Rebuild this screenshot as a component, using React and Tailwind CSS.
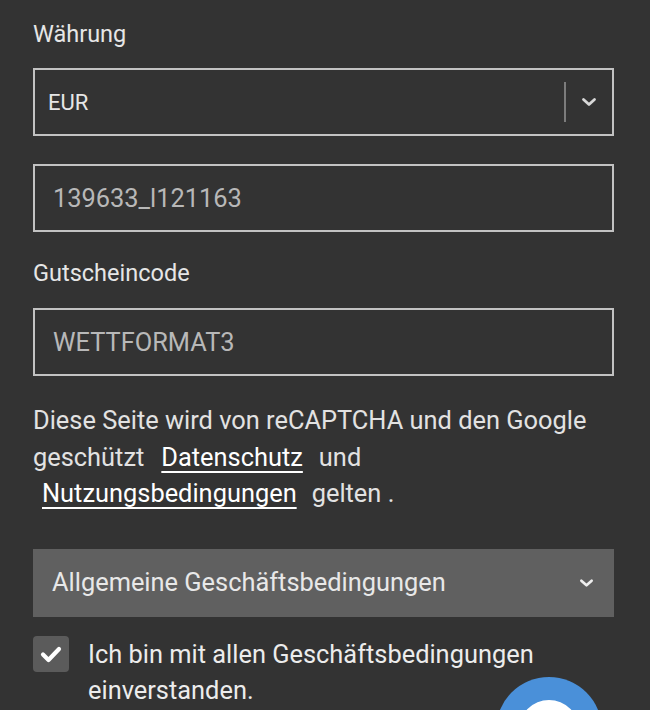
import React from "react";

function Chevron({ className }) {
  return (
    <svg viewBox="0 0 16 10" className={className} fill="none">
      <path d="M2.5 2.5 L8 7.5 L13.5 2.5" stroke="currentColor" strokeWidth="2.8" strokeLinecap="round" strokeLinejoin="round" />
    </svg>
  );
}

export default function App() {
  return (
    <div
      className="relative w-[650px] h-[710px] overflow-hidden bg-[#333333] pl-[33px] pr-[36px] pt-[20px] text-[#e4e4e4]"
      style={{ fontFamily: "Roboto, 'Noto Sans', sans-serif" }}
    >
      <div className="text-[23.5px] leading-[28px] text-[#e6e6e6]">Währung</div>

      <div className="mt-[20px] h-[68px] border-2 border-[#c2c2c2] flex items-center">
        <div className="flex-1 pl-[13px] text-[22px] text-[#e6e6e6]">EUR</div>
        <div className="w-[2px] h-[40px] bg-[#7c7c7c]" />
        <div className="w-[46px] flex justify-center items-center text-[#d8d8d8]">
          <Chevron className="w-[16px] h-[10px]" />
        </div>
      </div>

      <div className="mt-[28px] h-[68px] border-2 border-[#c2c2c2] flex items-center pl-[18px] text-[25.4px] text-[#b8b8b8]">
        139633_l121163
      </div>

      <div className="mt-[27px] text-[23.5px] leading-[28px] text-[#e6e6e6]">Gutscheincode</div>

      <div className="mt-[21px] h-[68px] border-2 border-[#c2c2c2] flex items-center pl-[18px] text-[25.4px] text-[#b8b8b8]">
        WETTFORMAT3
      </div>

      <div className="mt-[26px] text-[25.4px] leading-[36.5px] text-[#e2e2e2]">
        <div>Diese Seite wird von reCAPTCHA und den Google</div>
        <div>
          geschützt
          <a className="ml-[17px] underline underline-offset-[5px] decoration-[2px] text-white">Datenschutz</a>
          <span className="ml-[16px]">und</span>
        </div>
        <div>
          <a className="ml-[9px] underline underline-offset-[5px] decoration-[2px] text-white">Nutzungsbedingungen</a>
          <span className="ml-[15px]">gelten .</span>
        </div>
      </div>

      <div className="mt-[37px] h-[68px] bg-[#606060] flex items-center justify-between pl-[19px] pr-[20px]">
        <span className="text-[25.4px] text-[#e8e8e8]">Allgemeine Geschäftsbedingungen</span>
        <Chevron className="w-[15px] h-[10px] text-[#eeeeee]" />
      </div>

      <div className="mt-[19px] flex gap-[19px]">
        <div className="w-[36px] h-[36px] shrink-0 rounded-[4px] bg-[#5b5b5b] flex items-center justify-center">
          <svg viewBox="0 0 24 24" className="w-[24px] h-[24px]" fill="none">
            <path d="M4 12.5 L9.5 18 L20 7" stroke="#ffffff" strokeWidth="4.2" strokeLinecap="round" strokeLinejoin="round" />
          </svg>
        </div>
        <div className="text-[25.4px] leading-[36px] text-[#ececec]">
          Ich bin mit allen Geschäftsbedingungen
          <br />
          einverstanden.
        </div>
      </div>

      <div className="absolute left-[496px] top-[677px] w-[106px] h-[106px] rounded-full bg-[#4a90d9] flex items-center justify-center">
        <div className="w-[60px] h-[60px] rounded-full bg-white" />
      </div>
    </div>
  );
}
